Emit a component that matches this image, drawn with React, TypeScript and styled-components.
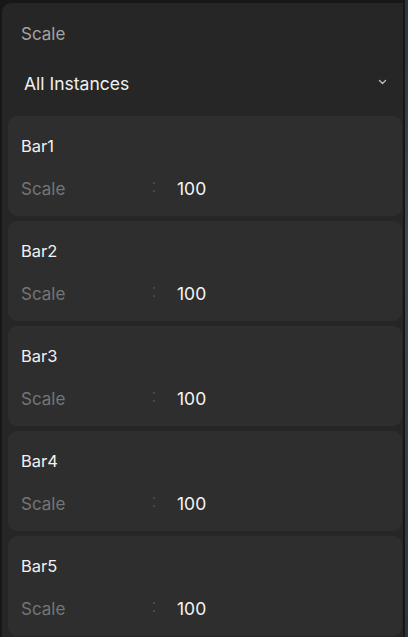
import React from "react";
import styled, { createGlobalStyle } from "styled-components";

const Global = createGlobalStyle`
  html, body {
    margin: 0;
    padding: 0;
    background: #171717;
    height: 637px;
    overflow: hidden;
  }
  body {
    font-family: Inter, "Noto Sans", sans-serif;
    -webkit-font-smoothing: antialiased;
  }
`;

const Frame = styled.div`
  display: flex;
  height: 637px;
  width: 408px;
  overflow: hidden;
`;

const Panel = styled.div`
  margin: 3px 0 0 2px;
  width: 401px;
  background: #262626;
  border-top-left-radius: 9px;
  display: flex;
  flex-direction: column;
`;

const Edge = styled.div`
  flex: 1;
  margin-left: 2px;
  background: linear-gradient(180deg, #2c3640 0%, #3b4857 40%, #2b3540 100%);
`;

const Title = styled.div`
  padding: 20px 0 0 19px;
  line-height: 22px;
  font-size: 17px;
  color: #a3a3a3;
`;

const Select = styled.div`
  margin-top: 18px;
  height: 40px;
  display: flex;
  align-items: center;
  justify-content: space-between;
  padding: 0 16px 0 22px;
  font-size: 17.5px;
  color: #f0f0f0;
`;

const Chevron = styled.svg`
  width: 9px;
  height: 6px;
  margin-top: -2px;
`;

const List = styled.div`
  margin: 13px 1px 0 6px;
  display: flex;
  flex-direction: column;
  gap: 5px;
`;

const Card = styled.div`
  height: 100px;
  flex-shrink: 0;
  background: #2e2e2e;
  border-radius: 9px;
  padding: 0 0 0 13px;
  box-sizing: border-box;
  display: flex;
  flex-direction: column;
`;

const Name = styled.div`
  padding-top: 19px;
  line-height: 22px;
  font-size: 16.5px;
  color: #f2f2f2;
`;

const Row = styled.div`
  margin-top: 21px;
  height: 22px;
  display: grid;
  grid-template-columns: 132px 24px 1fr;
  align-items: center;
`;

const Label = styled.div`
  font-size: 17px;
  color: #757575;
  line-height: 22px;
`;

const Handle = styled.div`
  display: flex;
  flex-direction: column;
  gap: 6px;
  margin-top: -5px;
  span {
    width: 2px;
    height: 2px;
    border-radius: 1px;
    background: #525252;
  }
`;

const Value = styled.div`
  font-size: 17.5px;
  color: #f5f5f5;
  line-height: 22px;
`;

const bars = ["Bar1", "Bar2", "Bar3", "Bar4", "Bar5"];

export default function App() {
  return (
    <>
      <Global />
      <Frame>
        <Panel>
          <Title>Scale</Title>
          <Select>
            <span>All Instances</span>
            <Chevron viewBox="0 0 9 6">
              <path d="M1.5 1.5 L4.5 4.5 L7.5 1.5" fill="none" stroke="#bdbdbd" strokeWidth="1.4" strokeLinecap="round" strokeLinejoin="round" />
            </Chevron>
          </Select>
          <List>
            {bars.map((b) => (
              <Card key={b}>
                <Name>{b}</Name>
                <Row>
                  <Label>Scale</Label>
                  <Handle>
                    <span />
                    <span />
                  </Handle>
                  <Value>100</Value>
                </Row>
              </Card>
            ))}
          </List>
        </Panel>
        <Edge />
      </Frame>
    </>
  );
}
